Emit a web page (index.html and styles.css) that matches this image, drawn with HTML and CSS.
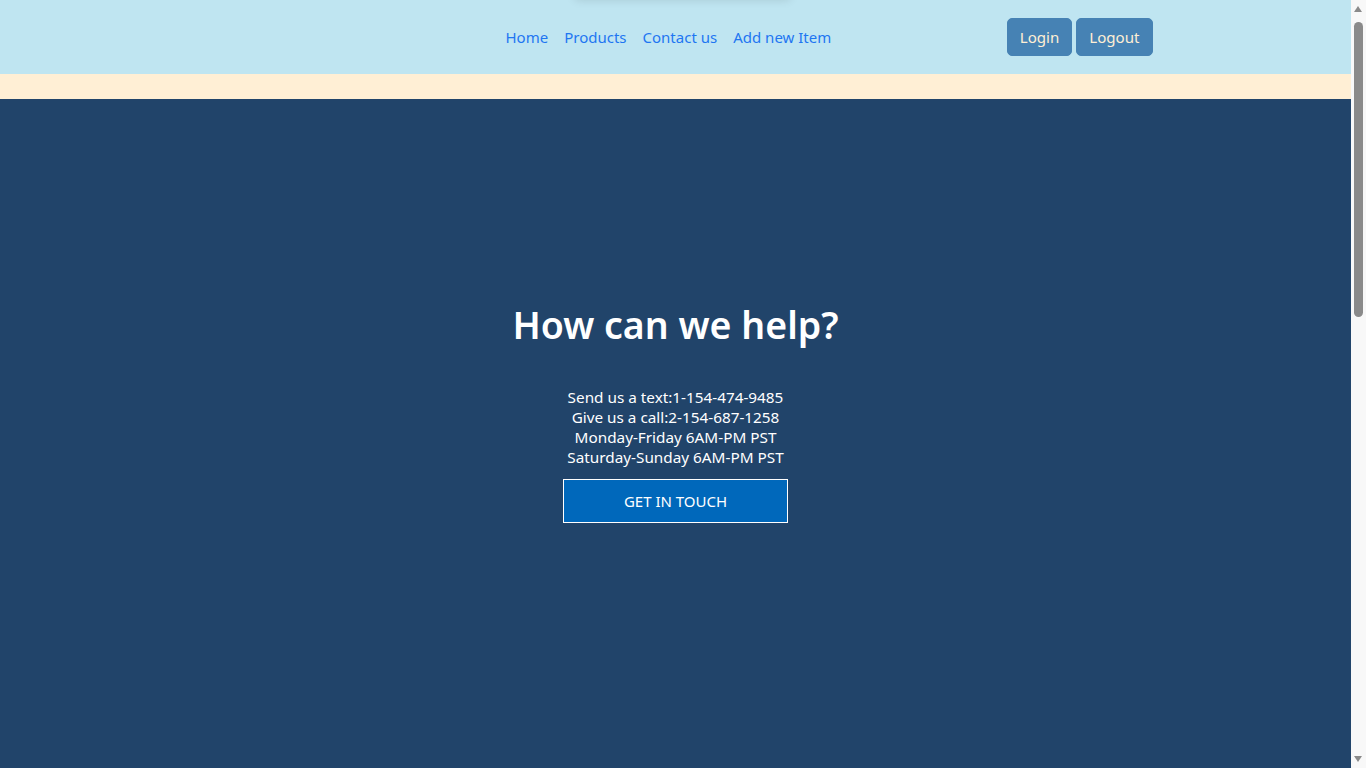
FILE: index.html
```html
<!DOCTYPE html>
<html lang="en">
<head>
<meta charset="utf-8">
<title>Contact us</title>
<link rel="stylesheet" href="styles.css">
</head>
<body>
<div class="page">
  <header class="navbar">
    <div class="top-shadow"></div>
    <div class="nav-inner">
      <nav class="links">
        <a href="#" class="nav-link">Home</a>
        <a href="#" class="nav-link">Products</a>
        <a href="#" class="nav-link">Contact us</a>
        <a href="#" class="nav-link">Add new Item</a>
      </nav>
      <div class="auth">
        <button class="btn">Login</button>
        <button class="btn">Logout</button>
      </div>
    </div>
  </header>
  <div class="band"></div>
  <main class="help">
    <h1 class="title">How can we help?</h1>
    <div class="info">
      <p>Send us a text:1-154-474-9485</p>
      <p>Give us a call:2-154-687-1258</p>
      <p>Monday-Friday 6AM-PM PST</p>
      <p>Saturday-Sunday 6AM-PM PST</p>
    </div>
    <button class="touch">GET IN TOUCH</button>
  </main>
</div>
<div class="scrollbar" aria-hidden="true">
  <span class="arrow up"></span>
  <span class="thumb"></span>
  <span class="arrow down"></span>
</div>
</body>
</html>
```
FILE: styles.css
```css
* { box-sizing: border-box; }
html, body { margin: 0; padding: 0; }
html { scrollbar-width: none; }
body {
  font-family: "Noto Sans", "Open Sans", sans-serif;
  font-size: 15.3px;
  line-height: 1.5;
  background: #21446a;
}
.page {
  width: 1351px;
}
.navbar {
  position: relative;
  height: 74px;
  background: #bfe5f1;
  overflow: hidden;
}
.top-shadow {
  position: absolute;
  top: -20px;
  left: 575px;
  width: 215px;
  height: 20px;
  box-shadow: 0 0 10px rgba(0, 0, 0, 0.12);
}
.nav-inner {
  width: 1140px;
  height: 74px;
  margin: 0 auto;
  display: flex;
  align-items: center;
  padding-left: 392px;
  padding-right: 93px;
}
.links { display: flex; }
.nav-link {
  color: #1e76f2;
  font-size: 15px;
  text-decoration: none;
  padding: 8px 8px;
}
.auth {
  margin-left: auto;
  display: flex;
  gap: 4px;
}
.btn {
  font: inherit;
  font-size: 15.1px;
  line-height: 24px;
  height: 38px;
  padding: 6px 12px;
  border: 1px solid #4682b4;
  border-radius: 5px;
  background: #4682b4;
  color: #ffefd5;
}
.band {
  height: 25px;
  background: #ffefd5;
}
.help {
  min-height: 1820px;
  display: flex;
  flex-direction: column;
  align-items: center;
  padding-top: 202px;
  color: #fff;
}
.title {
  margin: 0;
  font-size: 37.5px;
  font-weight: 600;
  line-height: 48px;
}
.info {
  margin-top: 38px;
  text-align: center;
  line-height: 20px;
}
.info p { margin: 0; }
.touch {
  margin-top: 12px;
  width: 225px;
  height: 44px;
  background: #0068bb;
  border: 1px solid #fff;
  color: #fff;
  font: inherit;
  font-size: 15px;
}
.scrollbar {
  position: fixed;
  top: 0;
  right: 0;
  width: 15px;
  height: 100vh;
  background: #f8f8f8;
}
.arrow {
  position: absolute;
  left: 3px;
  width: 0;
  height: 0;
  border-left: 4.5px solid transparent;
  border-right: 4.5px solid transparent;
}
.arrow.up {
  top: 6px;
  border-bottom: 6px solid #8a8a8a;
}
.arrow.down {
  bottom: 6px;
  border-top: 6px solid #8a8a8a;
}
.thumb {
  position: absolute;
  top: 22px;
  left: 3px;
  width: 9px;
  height: 295px;
  border-radius: 5px;
  background: #8a8a8a;
}
```
